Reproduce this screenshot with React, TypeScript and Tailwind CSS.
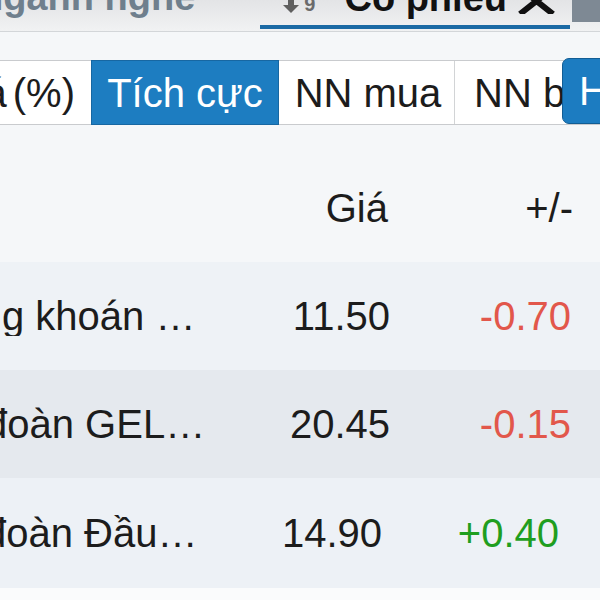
import React from "react";

const rows = [
  { name: "g khoán …", nameCls: "ml-[2px]", price: "11.50", change: "-0.70", up: false, bg: "bg-[#eef2f6]", h: "h-[108px]" },
  { name: "đoàn GEL…", nameCls: "-ml-[15px]", price: "20.45", change: "-0.15", up: false, bg: "bg-[#e5e9ee]", h: "h-[108px]" },
  { name: "đoàn Đầu…", nameCls: "-ml-[16px]", price: "14.90", change: "+0.40", up: true, bg: "bg-[#edf1f6]", h: "h-[110px]" },
];

function SortIcon() {
  return (
    <div className="flex items-start gap-[4px] text-[#6b6b6b]">
      <svg width="18" height="14" viewBox="0 0 18 14" className="-mt-[1px]">
        <path d="M6 0h6v6h5L9 14 1 6h5z" fill="#5f5f5f" />
      </svg>
      <span className="-mt-[6px] text-[20px] font-bold leading-none">9</span>
    </div>
  );
}

export default function App() {
  return (
    <div className="relative h-[600px] w-[600px] overflow-hidden bg-[#f5f7f9] font-['Liberation_Sans',Arial,sans-serif] text-[#1c1c1c]">
      {/* Top tabs */}
      <div className="relative h-[32px] border-b border-[#d3d6d9] bg-gradient-to-b from-[#e3e4e6] to-[#f1f2f3]">
        <div className="flex h-[31px] items-start">
          <span className="-ml-[20px] -mt-[22px] whitespace-nowrap text-[38px] font-bold leading-none text-[#6f7f8d]">
            ngành nghề
          </span>
          <div className="ml-[65px] flex h-[31px] w-[310px] flex-col">
            <div className="flex items-start">
              <div className="ml-[22px]">
                <SortIcon />
              </div>
              <span className="-mt-[21px] ml-[29px] whitespace-nowrap text-[38px] font-bold leading-none text-[#111]">
                Cổ phiếu
              </span>
              <svg width="40" height="14" viewBox="0 0 40 14" className="ml-[10px]">
                <path d="M3 -12L36 14M36 -12L3 14" stroke="#111" strokeWidth="6" />
              </svg>
            </div>
            <div className="mt-auto mb-[2px] h-[4px] bg-[#1b6aa4]" />
          </div>
          <div className="ml-auto h-[22px] w-[28px] bg-[#7e8994]" />
        </div>
      </div>

      {/* Segment filter */}
      <div className="relative mt-[28px]">
        <div className="flex h-[65px] border-y border-[#c9cbce] bg-white text-[40px] leading-none">
          <div className="flex w-[92px] shrink-0 items-center justify-end gap-[6px] whitespace-nowrap pr-[17px]">
            <span>giá</span>
            <span>(%)</span>
          </div>
          <div className="flex w-[186px] shrink-0 items-center justify-center bg-[#1d7dc1] text-white outline outline-1 outline-[#1767a2]">
            Tích cực
          </div>
          <div className="flex w-[177px] shrink-0 items-center justify-center border-r border-[#d2d4d6] pl-[4px]">
            NN mua
          </div>
          <div className="flex flex-1 items-center whitespace-nowrap pl-[19px]">NN bán</div>
        </div>
        <div className="absolute -top-[2px] left-[562px] flex h-[66px] w-[60px] items-center rounded-l-[7px] border border-[#125d94] bg-[#1c7cc1] pl-[16px] text-[40px] leading-none text-white">
          H
        </div>
      </div>

      {/* Table header */}
      <div className="flex h-[137px] items-end pb-[34px] text-[40px] leading-none">
        <div className="w-[388px] text-right">Giá</div>
        <div className="w-[185px] text-right">+/-</div>
      </div>

      {/* Rows */}
      {rows.map((r) => (
        <div key={r.price} className={`flex items-center text-[40px] leading-none ${r.h} ${r.bg}`}>
          <div className="w-[215px] shrink-0 overflow-hidden">
            <div className={`whitespace-nowrap ${r.nameCls}`}>{r.name}</div>
          </div>
          <div className="flex flex-1 items-center">
            <div className={`w-[175px] text-right ${r.price === "14.90" ? "pr-[8px]" : ""}`}>{r.price}</div>
            <div
              className={`w-[181px] text-right ${r.up ? "text-[#1f9e1f] pr-[12px]" : "text-[#e2574b]"}`}
            >
              {r.change}
            </div>
          </div>
        </div>
      ))}
      <div className="h-[40px] bg-[#fafbfc]" />
    </div>
  );
}
